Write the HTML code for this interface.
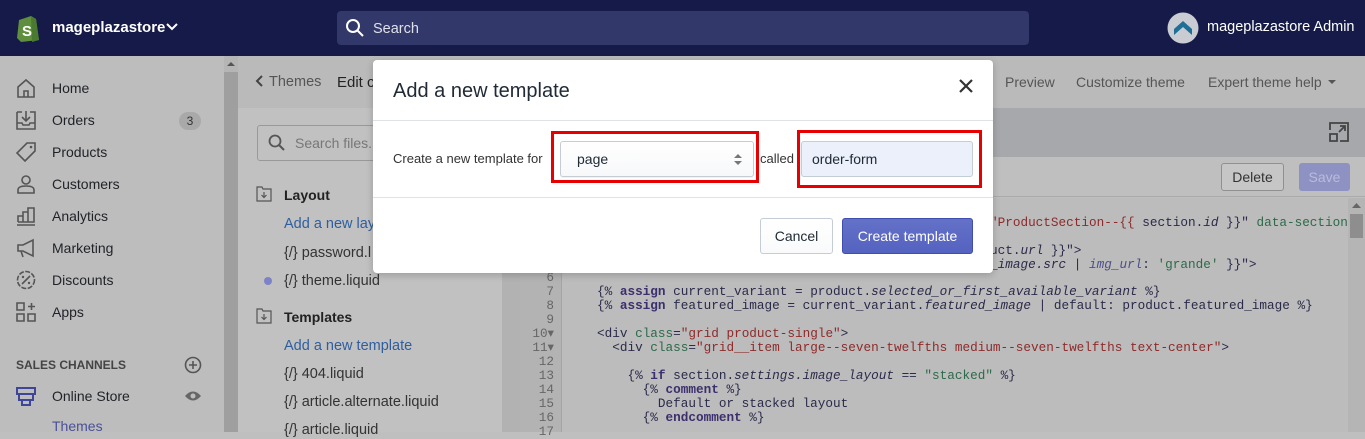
<!DOCTYPE html>
<html><head><meta charset="utf-8"><style>
*{margin:0;padding:0;box-sizing:border-box}
body{width:1365px;height:432px;overflow:hidden;position:relative;font-family:"Liberation Sans",sans-serif;background:#bfbfbf;color:#222}
.a{position:absolute}
.top{left:0;top:0;width:1365px;height:56px;background:#161a48}
.side{left:0;top:56px;width:224px;height:376px;background:#bdbdbd}
.nav{left:52px;font-size:14px;color:#1f2227}
.ic{left:16px;width:20px;height:20px}
.mono{font-family:"Liberation Mono",monospace;font-size:12.7px;white-space:pre;color:#2a2a4a}
.k{color:#3c2f6e;font-weight:bold}
.s{color:#8e2a2a}
.g{color:#2c6a4a}
.ln{left:520px;width:42px;text-align:right;padding-right:8px;font-family:"Liberation Mono",monospace;font-size:12.7px;color:#666}
.fl{left:284px;font-size:14.5px;color:#333}
</style></head><body>
<div class="a top"></div>
<!-- shopify logo -->
<svg class="a" style="left:15px;top:14px" width="26" height="28" viewBox="0 0 26 28"><path d="M4 6 L16 2 L21 5 L24 26 L6 28 L2 24 Z" fill="#5e8e3e"/><path d="M16 2 L21 5 L24 26 L17 28 Z" fill="#4a7a30"/><text x="7" y="22" font-size="15" font-weight="bold" fill="#fff" font-family="Liberation Sans">S</text></svg>
<div class="a" style="left:52px;top:19px;color:#fff;font-weight:bold;font-size:15px">mageplazastore</div>
<svg class="a" style="left:165px;top:22px" width="14" height="10"><path d="M2 2 L7 7 L12 2" stroke="#fff" stroke-width="2" fill="none"/></svg>
<div class="a" style="left:337px;top:11px;width:692px;height:34px;background:#33386a;border-radius:4px"></div>
<svg class="a" style="left:345px;top:18px" width="20" height="20"><circle cx="8" cy="8" r="6" stroke="#fff" stroke-width="2" fill="none"/><path d="M12.5 12.5 L18 18" stroke="#fff" stroke-width="2"/></svg>
<div class="a" style="left:373px;top:21px;color:#dfe0ea;font-size:14.5px">Search</div>
<svg class="a" style="left:1167px;top:12px" width="32" height="32"><circle cx="16" cy="16" r="15.5" fill="#c9ccd3"/><path d="M7 17 L16 9 L25 17 L25 23 L16 15 L7 23 Z" fill="#1d6f98"/></svg>
<div class="a" style="left:1207px;top:19px;color:#fff;font-size:14.5px">mageplazastore Admin</div>

<div class="a side"></div>
<div class="a" style="left:224px;top:56px;width:14px;height:376px;background:#9f9f9f"></div>
<div class="a" style="left:224px;top:56px;width:14px;height:16px;background:#b5b5b5"></div>
<svg class="a" style="left:227px;top:61px" width="8" height="6"><path d="M0 5 L4 1 L8 5Z" fill="#555"/></svg>

<svg class="a ic" style="top:78px" viewBox="0 0 20 20"><path d="M2 9 L10 2 L18 9 V19 H2 Z M8 19 V13 H12 V19" stroke="#555" stroke-width="1.6" fill="none"/></svg>
<div class="a nav" style="top:80px">Home</div>
<svg class="a ic" style="top:110px" viewBox="0 0 20 20"><path d="M1 2 H6 M14 2 H19 V19 H1 V2 M10 1 V10 M6 7 L10 11 L14 7 M1 13 H6 L7 15 H13 L14 13 H19" stroke="#555" stroke-width="1.6" fill="none"/></svg>
<div class="a nav" style="top:112px">Orders</div>
<div class="a" style="left:179px;top:112px;width:22px;height:18px;border-radius:9px;background:#a9a9a9;font-size:12px;text-align:center;line-height:18px;color:#333">3</div>
<svg class="a ic" style="top:142px" viewBox="0 0 20 20"><path d="M11 1 H19 V9 L9 19 L1 11 Z" stroke="#555" stroke-width="1.6" fill="none"/><circle cx="15" cy="5" r="1.3" fill="#555"/></svg>
<div class="a nav" style="top:144px">Products</div>
<svg class="a ic" style="top:174px" viewBox="0 0 20 20"><circle cx="10" cy="6" r="4" stroke="#555" stroke-width="1.6" fill="none"/><path d="M2 19 V16 Q2 12 10 12 Q18 12 18 16 V19 Z" stroke="#555" stroke-width="1.6" fill="none"/></svg>
<div class="a nav" style="top:176px">Customers</div>
<svg class="a ic" style="top:206px" viewBox="0 0 20 20"><path d="M1 19 H19 M2 16 V10 H7 V16 M7 16 V6 H12 V16 M12 16 V2 H18 V16 H2" stroke="#555" stroke-width="1.6" fill="none"/></svg>
<div class="a nav" style="top:208px">Analytics</div>
<svg class="a ic" style="top:238px" viewBox="0 0 20 20"><path d="M2 7 H7 L17 2 V18 L7 13 H2 Z M5 13 L7 19" stroke="#555" stroke-width="1.6" fill="none"/></svg>
<div class="a nav" style="top:240px">Marketing</div>
<svg class="a ic" style="top:270px" viewBox="0 0 20 20"><circle cx="10" cy="10" r="8.5" stroke="#555" stroke-width="1.6" fill="none" stroke-dasharray="5 1.5"/><path d="M6 14 L14 6" stroke="#555" stroke-width="1.6"/><circle cx="7" cy="7" r="1.2" fill="#555"/><circle cx="13" cy="13" r="1.2" fill="#555"/></svg>
<div class="a nav" style="top:272px">Discounts</div>
<svg class="a ic" style="top:302px" viewBox="0 0 20 20"><path d="M1 1 H8 V8 H1 Z M1 12 H8 V19 H1 Z M12 12 H19 V19 H12 Z M15.5 1 V8 M12 4.5 H19" stroke="#555" stroke-width="1.6" fill="none"/></svg>
<div class="a nav" style="top:304px">Apps</div>
<div class="a" style="left:16px;top:358px;font-size:12px;font-weight:bold;color:#444">SALES CHANNELS</div>
<svg class="a" style="left:184px;top:356px" width="18" height="18"><circle cx="9" cy="9" r="7.5" stroke="#555" stroke-width="1.6" fill="none"/><path d="M9 5 V13 M5 9 H13" stroke="#555" stroke-width="1.6"/></svg>
<svg class="a ic" style="top:386px" viewBox="0 0 20 20"><path d="M1 2 H19 V8 H1 Z M3 8 V14 H17 V8 M6 14 V19 H14 V14" stroke="#3f4599" stroke-width="2" fill="none"/></svg>
<div class="a nav" style="top:388px">Online Store</div>
<svg class="a" style="left:184px;top:390px" width="18" height="12"><path d="M1 6 Q9 -3 17 6 Q9 15 1 6Z" fill="#666"/><circle cx="9" cy="6" r="2.5" fill="#bdbdbd"/></svg>
<div class="a" style="left:52px;top:418px;font-size:14px;color:#4a4f9a">Themes</div>

<!-- content header -->
<div class="a" style="left:238px;top:56px;width:1127px;height:52px;background:#bababa"></div>
<svg class="a" style="left:255px;top:75px" width="8" height="12"><path d="M7 1 L2 6 L7 11" stroke="#444" stroke-width="2" fill="none"/></svg>
<div class="a" style="left:269px;top:74px;font-size:14.5px;color:#555">Themes</div>
<div class="a" style="left:337px;top:74px;font-size:15px;color:#222">Edit c</div>
<div class="a" style="left:1005px;top:74px;font-size:14px;color:#555">Preview</div>
<div class="a" style="left:1076px;top:74px;font-size:14px;color:#555">Customize theme</div>
<div class="a" style="left:1208px;top:74px;font-size:14px;color:#555">Expert theme help</div>
<svg class="a" style="left:1328px;top:80px" width="8" height="5"><path d="M0 0 H8 L4 4Z" fill="#555"/></svg>

<!-- files panel -->
<div class="a" style="left:238px;top:108px;width:264px;height:324px;background:#c1c1c1"></div>
<div class="a" style="left:257px;top:125px;width:130px;height:36px;border:1px solid #999;border-radius:3px"></div>
<svg class="a" style="left:268px;top:134px" width="18" height="18"><circle cx="7" cy="7" r="5.5" stroke="#555" stroke-width="1.8" fill="none"/><path d="M11 11 L16 16" stroke="#555" stroke-width="2"/></svg>
<div class="a" style="left:295px;top:135px;font-size:14px;color:#777">Search files...</div>
<svg class="a" style="left:256px;top:186px" width="16" height="16"><path d="M1 1 H6 L7 3 H15 V15 H1Z M8 6 V11 M5.5 9 L8 11.5 L10.5 9" stroke="#555" stroke-width="1.2" fill="none"/></svg>
<div class="a" style="left:284px;top:187px;font-size:14px;font-weight:bold;color:#222">Layout</div>
<div class="a fl" style="top:216px;color:#2f5e9e">Add a new lay</div>
<div class="a fl" style="top:245px">{/} password.l</div>
<div class="a" style="left:264px;top:277px;width:8px;height:8px;border-radius:4px;background:#7d82c6"></div>
<div class="a fl" style="top:273px">{/} theme.liquid</div>
<svg class="a" style="left:256px;top:308px" width="16" height="16"><path d="M1 1 H6 L7 3 H15 V15 H1Z M8 6 V11 M5.5 9 L8 11.5 L10.5 9" stroke="#555" stroke-width="1.2" fill="none"/></svg>
<div class="a" style="left:284px;top:309px;font-size:14px;font-weight:bold;color:#222">Templates</div>
<div class="a fl" style="top:338px;color:#2f5e9e">Add a new template</div>
<div class="a fl" style="top:366px">{/} 404.liquid</div>
<div class="a fl" style="top:394px">{/} article.alternate.liquid</div>
<div class="a fl" style="top:422px">{/} article.liquid</div>
<div class="a" style="left:502px;top:108px;width:18px;height:324px;background:#b2b2b2"></div>

<!-- editor -->
<div class="a" style="left:520px;top:108px;width:845px;height:49px;background:#a6a8ac"></div>
<div class="a" style="left:520px;top:108px;width:287px;height:49px;background:#bdbdbd"></div>
<div class="a" style="left:807px;top:108px;width:2px;height:49px;background:#5f64a8"></div>
<svg class="a" style="left:1328px;top:121px" width="22" height="22"><path d="M2 9 V2 H20 V20 H12 M2 13 H9 V20 H2Z M11 11 L17 5 M12 5 H17 V10" stroke="#444" stroke-width="1.8" fill="none"/></svg>
<div class="a" style="left:520px;top:157px;width:845px;height:40px;background:#bfbfbf;border-bottom:1px solid #aaa"></div>
<div class="a" style="left:1221px;top:163px;width:63px;height:28px;border:1px solid #909090;border-radius:3px;background:#c6c6c6;font-size:14px;text-align:center;line-height:26px;color:#333">Delete</div>
<div class="a" style="left:1299px;top:163px;width:51px;height:28px;border-radius:3px;background:#8d92c3;font-size:14px;text-align:center;line-height:28px;color:#b9bcdb">Save</div>
<div class="a" style="left:520px;top:198px;width:845px;height:234px;background:#bcbcbc"></div>
<div class="a" style="left:520px;top:198px;width:42px;height:234px;background:#b3b3b3;border-right:1px solid #a5a5a5"></div>
<div class="a" style="left:1348px;top:198px;width:17px;height:234px;background:#b5b5b5"></div>
<div class="a" style="left:1350px;top:214px;width:13px;height:24px;background:#8e8e8e"></div>
<svg class="a" style="left:1352px;top:203px" width="9" height="6"><path d="M0 5 L4.5 0 L9 5Z" fill="#666"/></svg>

<div class="a mono" style="left:990px;top:215px"><span class="s">"ProductSection--{{ </span><span>section.</span><i>id</i> }}" <span class="g">data-section</span></div>
<div class="a mono" style="left:990px;top:243px">uct.<i>url</i> }}"&gt;</div>
<div class="a mono" style="left:990px;top:257px">_<i>image.src</i> | <i style="color:#4a4f8a">img_url</i>: <span class="g">'grande'</span> }}"&gt;</div>

<div class="a ln" style="top:271px;line-height:14px">6
<br>7<br>8<br>9<br>10▾<br>11▾<br>12<br>13<br>14<br>15<br>16<br>17</div>
<div class="a mono" style="left:597px;top:285px;line-height:14px">{% <span class="k">assign</span> current_variant = product.<i>selected_or_first_available_variant</i> %}
{% <span class="k">assign</span> featured_image = current_variant.<i>featured_image</i> | default: product.featured_image %}

&lt;div <span class="g">class</span>=<span class="s">"grid product-single"</span>&gt;
  &lt;div <span class="g">class</span>=<span class="s">"grid__item large--seven-twelfths medium--seven-twelfths text-center"</span>&gt;

    {% <span class="k">if</span> section.<i>settings.image_layout</i> == <span class="g">"stacked"</span> %}
      {% <span class="k">comment</span> %}
        Default or stacked layout
      {% <span class="k">endcomment</span> %}</div>

<!-- modal -->
<div class="a" style="left:373px;top:60px;width:620px;height:213px;background:#fff;border-radius:4px;box-shadow:0 2px 8px rgba(0,0,0,.2)"></div>
<div class="a" style="left:393px;top:80px;font-size:20px;color:#212b36">Add a new template</div>
<svg class="a" style="left:959px;top:79px" width="14" height="14"><path d="M1 1 L13 13 M13 1 L1 13" stroke="#333" stroke-width="2.2"/></svg>
<div class="a" style="left:373px;top:120px;width:620px;height:1px;background:#dfe3e8"></div>
<div class="a" style="left:393px;top:151px;font-size:13px;color:#333">Create a new template for</div>
<div class="a" style="left:551px;top:131px;width:208px;height:52px;border:3px solid #e80000"></div>
<div class="a" style="left:560px;top:141px;width:194px;height:36px;border:1px solid #c4cdd5;border-radius:3px;background:linear-gradient(#fff,#f7f8fa);box-shadow:0 1px 1px rgba(0,0,0,.06)"></div>
<div class="a" style="left:577px;top:151px;font-size:14px;color:#212b36">page</div>
<svg class="a" style="left:734px;top:154px" width="8" height="11"><path d="M0 4 L4 0 L8 4Z M0 7 L4 11 L8 7Z" fill="#777"/></svg>
<div class="a" style="left:760px;top:151px;font-size:13px;color:#333">called</div>
<div class="a" style="left:797px;top:130px;width:185px;height:58px;border:3px solid #e80000"></div>
<div class="a" style="left:801px;top:141px;width:172px;height:36px;border:1px solid #c4cdd5;border-radius:3px;background:#ebf0fb"></div>
<div class="a" style="left:812px;top:151px;font-size:14px;color:#212b36">order-form</div>
<div class="a" style="left:373px;top:197px;width:620px;height:1px;background:#dfe3e8"></div>
<div class="a" style="left:760px;top:218px;width:73px;height:36px;border:1px solid #c4cdd5;border-radius:3px;background:linear-gradient(#fff,#f9fafb);font-size:14px;text-align:center;line-height:34px;color:#212b36">Cancel</div>
<div class="a" style="left:842px;top:218px;width:131px;height:36px;border:1px solid #3f4eae;border-radius:3px;background:linear-gradient(#6371c7,#5563c1);font-size:14px;text-align:center;line-height:34px;color:#fff">Create template</div>
</body></html>
